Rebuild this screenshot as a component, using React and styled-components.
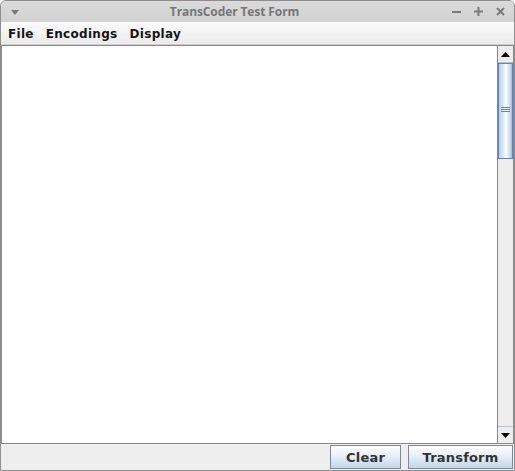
import React from "react";
import styled, { createGlobalStyle } from "styled-components";

const Global = createGlobalStyle`
  html, body { margin: 0; padding: 0; background: #ffffff; }
  body { width: 515px; height: 471px; overflow: hidden; }
  #root { width: 515px; height: 471px; }
`;

const Window = styled.div`
  box-sizing: border-box;
  width: 515px;
  height: 471px;
  border: 1px solid #8e8e8e;
  border-radius: 6px 6px 0 0;
  overflow: hidden;
  display: flex;
  flex-direction: column;
  background: #eeeeee;
  font-family: "DejaVu Sans", sans-serif;
`;

const TitleBar = styled.div`
  height: 21px;
  flex: none;
  display: grid;
  grid-template-columns: 40px 1fr 70px;
  align-items: center;
  background: linear-gradient(#dadada, #d2d2d2);
`;

const TitleText = styled.div`
  text-align: center;
  font-family: "Open Sans", "DejaVu Sans", sans-serif;
  font-weight: 700;
  font-size: 12px;
  color: #767676;
  padding-right: 16px;
  letter-spacing: -0.1px;
`;

const TitleControls = styled.div`
  display: flex;
  gap: 13px;
  align-items: center;
  justify-content: flex-end;
  padding-right: 9px;
`;

const MenuBar = styled.div`
  height: 22px;
  flex: none;
  display: flex;
  align-items: center;
  gap: 12px;
  padding-left: 7px;
  background: linear-gradient(#fbfbfb, #ebebeb);
  border-bottom: 1px solid #cfcfcf;
`;

const MenuItem = styled.div`
  font-size: 12px;
  font-weight: 700;
  color: #151515;
  letter-spacing: 0.3px;
  padding-top: 1px;
  line-height: 22px;
`;

const Body = styled.div`
  flex: 1;
  display: flex;
  min-height: 0;
  border: 1px solid #7a8a99;
  background: #fff;
`;

const TextArea = styled.div`
  flex: 1;
  background: #ffffff;
`;

const ScrollBar = styled.div`
  width: 15px;
  flex: none;
  display: flex;
  flex-direction: column;
  background: #eeeeee;
  border-left: 1px solid #7a8a99;
`;

const ArrowBtn = styled.div`
  height: 16px;
  flex: none;
  display: flex;
  align-items: center;
  justify-content: center;
  background: #eeeeee;
  border-bottom: ${(p) => (p.$down ? "none" : "1px solid #b8c4d0")};
  border-top: ${(p) => (p.$down ? "1px solid #b8c4d0" : "none")};
`;

const Track = styled.div`
  flex: 1;
  display: flex;
  flex-direction: column;
`;

const Thumb = styled.div`
  box-sizing: border-box;
  height: 96px;
  flex: none;
  border: 1px solid #6382bf;
  background: linear-gradient(90deg, #b8cfe5 0%, #dbe7f3 30%, #ffffff 55%, #c6d8ea 85%, #a3bcd6 100%);
  display: flex;
  align-items: center;
  justify-content: center;
`;

const Grip = styled.div`
  width: 9px;
  display: flex;
  flex-direction: column;
  gap: 1px;
  margin-top: -4px;
`;

const GripLine = styled.div`
  height: 1px;
  background: #6382bf;
`;

const Footer = styled.div`
  height: 26px;
  flex: none;
  display: flex;
  justify-content: flex-end;
  align-items: center;
  gap: 7px;
  padding-right: 1px;
  background: #eeeeee;
`;

const Button = styled.div`
  box-sizing: border-box;
  width: ${(p) => p.$w}px;
  height: 24px;
  display: flex;
  align-items: center;
  justify-content: center;
  border: 1px solid #7a8a99;
  background: linear-gradient(#ffffff 0%, #e4edf6 50%, #c4d6e9 100%);
  font-weight: 700;
  font-size: 13px;
  color: #333333;
  letter-spacing: 0.2px;
`;

const Icon = styled.svg`
  display: block;
`;

export default function App() {
  return (
    <>
      <Global />
      <Window>
        <TitleBar>
          <Icon width="40" height="21" viewBox="0 0 40 21">
            <polygon points="10,9 18,9 14,14" fill="#7a7a7a" />
          </Icon>
          <TitleText>TransCoder Test Form</TitleText>
          <TitleControls>
            <Icon width="9" height="9" viewBox="0 0 9 9">
              <rect x="0" y="4" width="9" height="2" fill="#7a7a7a" />
            </Icon>
            <Icon width="9" height="9" viewBox="0 0 9 9">
              <rect x="0" y="3.5" width="9" height="2" fill="#7a7a7a" />
              <rect x="3.5" y="0" width="2" height="9" fill="#7a7a7a" />
            </Icon>
            <Icon width="9" height="9" viewBox="0 0 9 9">
              <path d="M1 1 L8 8 M8 1 L1 8" stroke="#7a7a7a" strokeWidth="2" />
            </Icon>
          </TitleControls>
        </TitleBar>
        <MenuBar>
          <MenuItem>File</MenuItem>
          <MenuItem>Encodings</MenuItem>
          <MenuItem>Display</MenuItem>
        </MenuBar>
        <Body>
          <TextArea />
          <ScrollBar>
            <ArrowBtn>
              <Icon width="9" height="5" viewBox="0 0 9 5">
                <polygon points="0,5 9,5 4.5,0" fill="#000" />
              </Icon>
            </ArrowBtn>
            <Track>
              <Thumb>
                <Grip>
                  <GripLine />
                  <GripLine />
                  <GripLine />
                </Grip>
              </Thumb>
            </Track>
            <ArrowBtn $down>
              <Icon width="9" height="5" viewBox="0 0 9 5">
                <polygon points="0,0 9,0 4.5,5" fill="#000" />
              </Icon>
            </ArrowBtn>
          </ScrollBar>
        </Body>
        <Footer>
          <Button $w={71}>Clear</Button>
          <Button $w={105}>Transform</Button>
        </Footer>
      </Window>
    </>
  );
}
